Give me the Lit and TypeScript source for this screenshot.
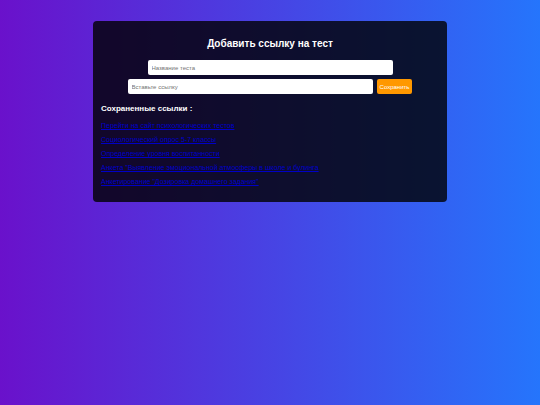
import { LitElement, html, css } from "lit";
import { customElement, state } from "lit/decorators.js";

interface SavedLink {
  title: string;
  url: string;
}

@customElement("app-root")
export class AppRoot extends LitElement {
  static styles = css`
    :host {
      display: block;
      box-sizing: border-box;
      min-height: 100vh;
      padding: 21px 12px;
      font-family: "Liberation Sans", Arial, sans-serif;
      background: linear-gradient(to right, #6a11cb, #2575fc);
      color: #fff;
    }
    .card {
      box-sizing: border-box;
      max-width: 354px;
      margin: 0 auto;
      padding: 16px 8px 13px;
      border-radius: 4px;
      background: rgba(0, 0, 0, 0.8);
    }
    .title {
      margin: 0 0 10px;
      font-size: 10px;
      line-height: 13px;
      text-align: center;
    }
    .form {
      display: flex;
      flex-direction: column;
      gap: 4px;
    }
    .row {
      display: flex;
      justify-content: center;
      gap: 4px;
    }
    .field,
    .save {
      box-sizing: border-box;
      height: 15px;
      margin: 0;
      padding: 0 4px;
      border: 0;
      border-radius: 2px;
      font-family: inherit;
      font-size: 6px;
    }
    .field {
      flex: 0 1 245px;
      min-width: 0;
      background: #fff;
      color: #222;
    }
    .field::placeholder {
      color: #757575;
      opacity: 1;
    }
    .save {
      padding: 0 3px;
      background: #ff9800;
      color: #fff;
      cursor: pointer;
    }
    .subtitle {
      margin: 10px 0 5px;
      font-size: 8px;
      line-height: 10px;
    }
    .list {
      margin: 0;
      padding: 0;
      list-style: none;
      font-size: 7px;
      line-height: 14px;
    }
    .link {
      color: #0000c8;
    }
  `;

  @state() private links: SavedLink[] = [
    { title: "Перейти на сайт психологических тестов", url: "#tests" },
    { title: "Социологический опрос 5-7 классы", url: "#survey" },
    { title: "Определение уровня воспитанности", url: "#manners" },
    { title: 'Анкета "Выявление эмоциональной атмосферы в школе и булинга', url: "#climate" },
    { title: 'Анкетирование "Дозировка домашнего задания"', url: "#homework" },
  ];

  private save(event: SubmitEvent) {
    event.preventDefault();
    const form = event.target as HTMLFormElement;
    const data = new FormData(form);
    const title = String(data.get("title") ?? "").trim();
    const url = String(data.get("url") ?? "").trim();
    if (!title || !url) return;
    this.links = [...this.links, { title, url }];
    form.reset();
  }

  render() {
    return html`
      <main class="card">
        <h2 class="title">Добавить ссылку на тест</h2>
        <form class="form" @submit=${this.save}>
          <div class="row">
            <input class="field" type="text" name="title" placeholder="Название теста" aria-label="Название теста" />
          </div>
          <div class="row">
            <input class="field" type="text" name="url" placeholder="Вставьте ссылку" aria-label="Вставьте ссылку" />
            <button class="save" type="submit">Сохранить</button>
          </div>
        </form>
        <h3 class="subtitle">Сохраненные ссылки :</h3>
        <ul class="list">
          ${this.links.map((l) => html`<li><a class="link" href=${l.url}>${l.title}</a></li>`)}
        </ul>
      </main>
    `;
  }
}
